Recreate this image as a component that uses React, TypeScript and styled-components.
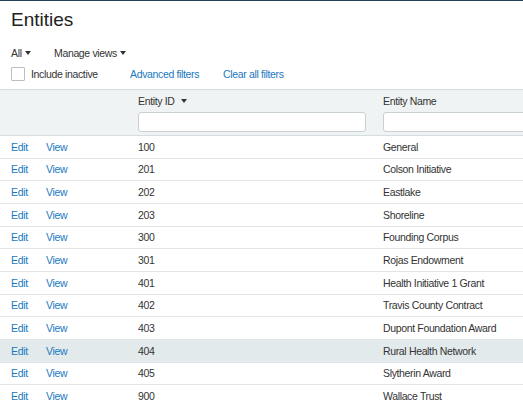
import React from 'react'
import styled, { createGlobalStyle } from 'styled-components'

const GlobalStyle = createGlobalStyle`
    html, body {
        margin: 0;
        padding: 0;
        background: #ffffff;
    }
    body {
        font-family: "Liberation Sans", Arial, sans-serif;
        color: #333333;
    }
`

const rows = [
    { id: '100', name: 'General' },
    { id: '201', name: 'Colson Initiative' },
    { id: '202', name: 'Eastlake' },
    { id: '203', name: 'Shoreline' },
    { id: '300', name: 'Founding Corpus' },
    { id: '301', name: 'Rojas Endowment' },
    { id: '401', name: 'Health Initiative 1 Grant' },
    { id: '402', name: 'Travis County Contract' },
    { id: '403', name: 'Dupont Foundation Award' },
    { id: '404', name: 'Rural Health Network', hover: true },
    { id: '405', name: 'Slytherin Award' },
    { id: '900', name: 'Wallace Trust' }
]

const components = {
    Page: styled.div`
        width: 523px;
        height: 405px;
        overflow: hidden;
        border-top: 1px solid #27415a;
        box-sizing: border-box;
        font-size: 10.5px;
        letter-spacing: -0.35px;
    `,
    Title: styled.h1`
        margin: 0;
        padding: 7px 0 0 11px;
        font-size: 19px;
        font-weight: normal;
        line-height: 24px;
        letter-spacing: 0;
        color: #222;
    `,
    Toolbar: styled.div`
        display: flex;
        align-items: center;
        padding: 14px 0 0 11px;
        height: 14px;
    `,
    Dropdown: styled.span<{ $w?: number }>`
        display: inline-flex;
        align-items: center;
        gap: 3px;
        width: ${p => (p.$w ? `${p.$w}px` : 'auto')};
        color: #333;
    `,
    Caret: styled.span`
        display: inline-block;
        width: 0;
        height: 0;
        border-left: 3.5px solid transparent;
        border-right: 3.5px solid transparent;
        border-top: 4px solid #333;
    `,
    FilterBar: styled.div`
        display: flex;
        align-items: center;
        padding: 7px 0 0 11px;
        height: 14px;
    `,
    Check: styled.span`
        width: 12px;
        height: 12px;
        border: 1px solid #b8c0c4;
        border-radius: 1px;
        background: #fff;
        margin-right: 6px;
    `,
    Label: styled.span<{ $w?: number }>`
        width: ${p => p.$w ?? 'auto'}px;
        color: #333;
    `,
    Link: styled.span<{ $w?: number }>`
        display: inline-block;
        width: ${p => (p.$w ? `${p.$w}px` : 'auto')};
        color: #1a78c2;
    `,
    Grid: styled.div`
        margin-top: 8px;
        border-top: 1px solid #d6dcdf;
    `,
    HeaderRow: styled.div`
        display: grid;
        grid-template-columns: 35px 92px 245px 1fr;
        padding-left: 11px;
        height: 45px;
        background: #f0f3f4;
        border-bottom: 1px solid #d6dcdf;
        box-sizing: content-box;
    `,
    HeaderCell: styled.div`
        display: flex;
        flex-direction: column;
        padding-top: 5px;
        min-width: 0;
    `,
    HeaderLabel: styled.span`
        display: inline-flex;
        align-items: center;
        gap: 6px;
        height: 12px;
        color: #333;
    `,
    FilterInput: styled.div<{ $w?: number }>`
        margin-top: 5px;
        width: ${p => (p.$w ? `${p.$w}px` : '200px')};
        height: 18px;
        border: 1px solid #c8d0d4;
        border-radius: 3px;
        background: #fff;
    `,
    Row: styled.div<{ $hover?: boolean }>`
        display: grid;
        grid-template-columns: 35px 92px 245px 1fr;
        align-items: center;
        padding-left: 11px;
        height: 22.67px;
        box-sizing: border-box;
        border-bottom: 1px solid #e1e5e7;
        background: ${p => (p.$hover ? '#e3eaec' : '#ffffff')};
    `,
    Cell: styled.span`
        color: #333;
        white-space: nowrap;
    `
}

export default function App() {
    return (
        <>
            <GlobalStyle />
            <components.Page>
                <components.Title>Entities</components.Title>
                <components.Toolbar>
                    <components.Dropdown $w={43}>
                        All <components.Caret />
                    </components.Dropdown>
                    <components.Dropdown>
                        Manage views <components.Caret />
                    </components.Dropdown>
                </components.Toolbar>
                <components.FilterBar>
                    <components.Check />
                    <components.Label $w={99}>Include inactive</components.Label>
                    <components.Link $w={93}>Advanced filters</components.Link>
                    <components.Link>Clear all filters</components.Link>
                </components.FilterBar>
                <components.Grid>
                    <components.HeaderRow>
                        <div />
                        <div />
                        <components.HeaderCell>
                            <components.HeaderLabel>
                                Entity ID <components.Caret />
                            </components.HeaderLabel>
                            <components.FilterInput $w={226} />
                        </components.HeaderCell>
                        <components.HeaderCell>
                            <components.HeaderLabel>Entity Name</components.HeaderLabel>
                            <components.FilterInput $w={200} />
                        </components.HeaderCell>
                    </components.HeaderRow>
                    {rows.map(r => (
                        <components.Row key={r.id} $hover={r.hover}>
                            <components.Link>Edit</components.Link>
                            <components.Link>View</components.Link>
                            <components.Cell>{r.id}</components.Cell>
                            <components.Cell>{r.name}</components.Cell>
                        </components.Row>
                    ))}
                </components.Grid>
            </components.Page>
        </>
    )
}
